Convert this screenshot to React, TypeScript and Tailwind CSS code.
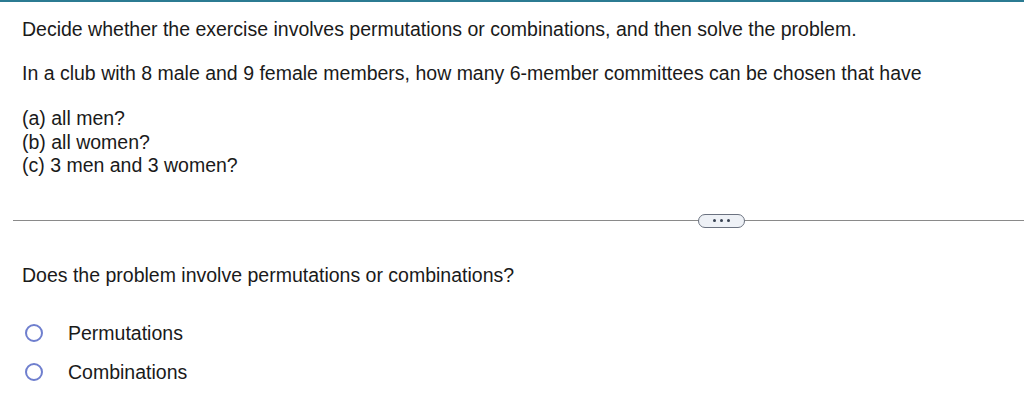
export default function App() {
  return (
    <div className="w-[1024px] h-[408px] bg-white border-t-2 border-[#2b7b92] text-[#1a1a1a] text-[19.5px] leading-[23px]" style={{ fontFamily: '"Liberation Sans", Arial, sans-serif' }}>
      <div className="pl-[22px] pt-[16px]">
        <p>Decide whether the exercise involves permutations or combinations, and then solve the problem.</p>
        <p className="mt-[21px]">In a club with 8 male and 9 female members, how many 6-member committees can be chosen that have</p>
        <div className="mt-[22px] leading-[23.5px]">
          <p>(a) all men?</p>
          <p>(b) all women?</p>
          <p>(c) 3 men and 3 women?</p>
        </div>
      </div>
      <div className="relative mt-[36px] ml-[13px] h-[14px] flex items-center">
        <div className="w-full h-px bg-[#8a8a8a]" />
        <div className="absolute left-[685px] top-0 w-[47px] h-[14px] rounded-full border border-[#6b7280] bg-[#eef1f6] flex items-center justify-center gap-[4px]">
          <span className="w-[3px] h-[3px] rounded-full bg-[#374151]" />
          <span className="w-[3px] h-[3px] rounded-full bg-[#374151]" />
          <span className="w-[3px] h-[3px] rounded-full bg-[#374151]" />
        </div>
      </div>
      <div className="pl-[22px]">
        <p className="mt-[36px]">Does the problem involve permutations or combinations?</p>
        <div className="mt-[35px] flex flex-col gap-[16px]">
          <label className="flex items-center">
            <span className="w-[18px] h-[18px] rounded-full border-2 border-[#6f7fce] ml-[3px]" />
            <span className="ml-[25px]">Permutations</span>
          </label>
          <label className="flex items-center">
            <span className="w-[18px] h-[18px] rounded-full border-2 border-[#6f7fce] ml-[3px]" />
            <span className="ml-[25px]">Combinations</span>
          </label>
        </div>
      </div>
    </div>
  );
}
